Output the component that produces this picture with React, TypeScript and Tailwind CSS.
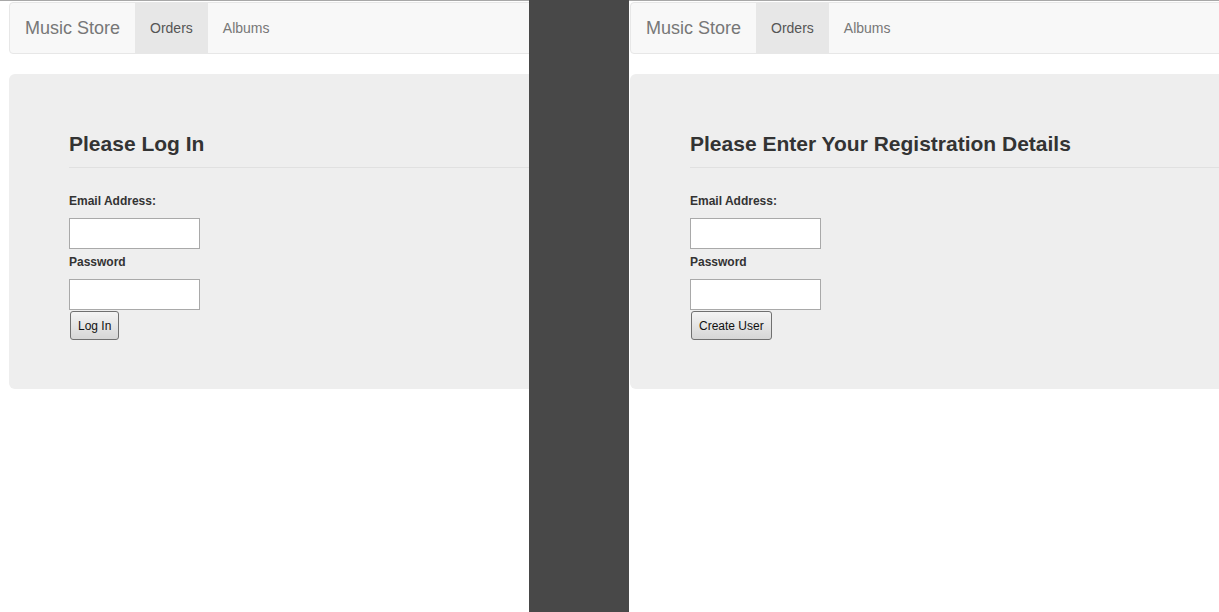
import React from "react";

const font = { fontFamily: '"Liberation Sans", Arial, sans-serif' };

type PanelProps = {
  title: string;
  buttonLabel: string;
  className: string;
};

const Panel = ({ title, buttonLabel, className }: PanelProps) => {
  return (
    <div className={`h-full overflow-hidden border-t border-[#a8a8a8] pt-[1px] ${className}`}>
      <div className="w-[1300px]">
        {/* navbar */}
        <nav className="flex h-[52px] items-stretch rounded-l-[4px] border border-[#e7e7e7] bg-[#f8f8f8]">
          <span className="flex items-center px-[15px] text-[18px] leading-[20px] text-[#777]">
            Music Store
          </span>
          <a className="flex items-center bg-[#e7e7e7] px-[15px] text-[14px] text-[#555]">
            Orders
          </a>
          <a className="flex items-center px-[15px] text-[14px] text-[#777]">
            Albums
          </a>
        </nav>

        {/* jumbotron */}
        <div className="mt-[20px] rounded-[6px] bg-[#eeeeee] pl-[60px] pt-[58px] pb-[49px]">
          <h3 className="border-b border-[#e0e0e0] pb-[12px] text-[21px] font-bold leading-[23px] text-[#333]">
            {title}
          </h3>
          <form className="mt-[26px] flex flex-col items-start">
            <label className="text-[12px] font-bold leading-[15px] text-[#333]">
              Email Address:
            </label>
            <input
              type="text"
              className="mt-[9px] h-[31px] w-[131px] border border-[#a9a9a9] bg-white"
            />
            <label className="mt-[6px] text-[12px] font-bold leading-[15px] text-[#333]">
              Password
            </label>
            <input
              type="password"
              className="mt-[9px] h-[31px] w-[131px] border border-[#a9a9a9] bg-white"
            />
            <button
              type="button"
              className="ml-[1px] mt-[1px] h-[29px] rounded-[3px] border border-[#707070] bg-gradient-to-b from-[#f4f4f4] to-[#d6d6d6] px-[7px] text-[12px] text-[#111]"
            >
              {buttonLabel}
            </button>
          </form>
        </div>
      </div>
    </div>
  );
};

export default function App() {
  return (
    <div className="flex h-[612px] w-[1219px] overflow-hidden bg-white" style={font}>
      <Panel title="Please Log In" buttonLabel="Log In" className="w-[529px] shrink-0 pl-[9px]" />
      <div className="h-full w-[100px] shrink-0 bg-[#484848]" />
      <Panel
        title="Please Enter Your Registration Details"
        buttonLabel="Create User"
        className="flex-1 pl-[1px]"
      />
    </div>
  );
}
